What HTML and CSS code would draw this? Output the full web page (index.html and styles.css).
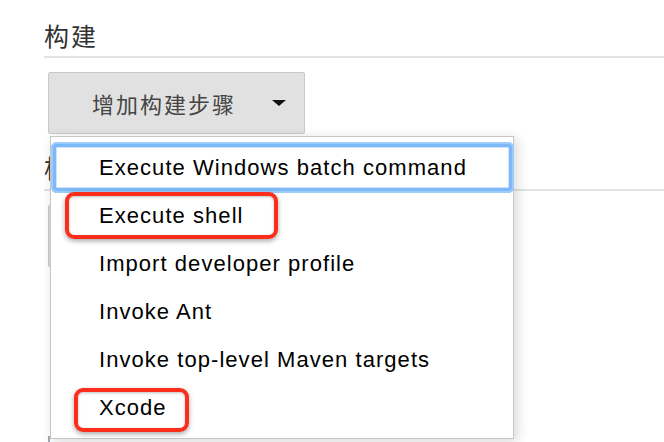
FILE: index.html
```html
<!DOCTYPE html>
<html lang="zh-CN">
<head>
<meta charset="utf-8">
<title>构建</title>
<link rel="stylesheet" href="styles.css">
</head>
<body>
<div class="page">
  <section class="section">
    <h2 class="title">构建</h2>
    <button class="add-btn" type="button"><span class="btn-label">增加构建步骤</span><span class="caret"></span></button>
  </section>
  <section class="section second">
    <h2 class="title">构建后操作</h2>
    <button class="add-btn" type="button"><span class="btn-label">增加构建后操作步骤</span><span class="caret"></span></button>
    <div class="below-box"></div>
  </section>

  <ul class="menu">
    <li class="menu-item focused">Execute Windows batch command</li>
    <li class="menu-item">Execute shell</li>
    <li class="menu-item">Import developer profile</li>
    <li class="menu-item">Invoke Ant</li>
    <li class="menu-item">Invoke top-level Maven targets</li>
    <li class="menu-item">Xcode</li>
  </ul>

  <div class="mark mark-shell"></div>
  <div class="mark mark-xcode"></div>
</div>
</body>
</html>
```

FILE: styles.css
```css
html, body {
  margin: 0;
  padding: 0;
  background: #ffffff;
}

.page {
  position: relative;
  width: 664px;
  height: 442px;
  overflow: hidden;
  font-family: "Liberation Sans", "Noto Sans CJK SC", sans-serif;
}

.section {
  padding-left: 44px;
}

.title {
  margin: 0;
  padding: 19px 0 5px 0;
  font-family: "Noto Sans CJK SC", "Liberation Sans", sans-serif;
  font-size: 25px;
  font-weight: normal;
  line-height: 32px;
  letter-spacing: 2px;
  color: #333333;
  border-bottom: 2px solid #e2e2e2;
}

.add-btn {
  display: flex;
  align-items: center;
  box-sizing: border-box;
  margin: 14px 0 0 4px;
  width: 257px;
  height: 62px;
  padding: 0 0 0 43px;
  background: #e1e1e1;
  border: 1.5px solid #c9c9c9;
  border-radius: 2px;
  font-family: "Noto Sans CJK SC", "Liberation Sans", sans-serif;
  font-size: 22px;
  letter-spacing: 2px;
  color: #444444;
}

.btn-label {
  white-space: nowrap;
}

.caret {
  margin-left: 36px;
  width: 0;
  height: 0;
  border-left: 7px solid transparent;
  border-right: 7px solid transparent;
  border-top: 6px solid #111111;
}

.second .title {
  padding-top: 17px;
  padding-bottom: 6px;
}

.second .add-btn {
  margin-top: 14px;
}

.below-box {
  margin: 169px 0 0 4px;
  height: 20px;
  width: 300px;
  border-top: 1px solid #9fabb9;
  border-left: 2px solid #9fabb9;
}

.menu {
  position: absolute;
  left: 50px;
  top: 136px;
  box-sizing: border-box;
  width: 464px;
  height: 303px;
  margin: 0;
  padding: 6px 0 0 0;
  list-style: none;
  background: #ffffff;
  border: 1.5px solid #c6c6c6;
  box-shadow: 3px 3px 12px rgba(0, 0, 0, 0.16);
}

.menu-item {
  position: relative;
  box-sizing: border-box;
  height: 48px;
  padding-top: 2px;
  line-height: 46px;
  padding-left: 48px;
  font-size: 22px;
  letter-spacing: 1.05px;
  color: #000000;
  white-space: nowrap;
}

.menu-item.focused::after {
  content: "";
  position: absolute;
  left: 0;
  right: -1px;
  top: -1px;
  bottom: -2px;
  border-radius: 6px;
  box-shadow: inset 0 0 0 2px #9ecbfa, inset 0 0 0 5px #7db8f8, inset 0 0 0 6px #cfe4fc;
}

.mark {
  position: absolute;
  box-sizing: border-box;
  border: 4px solid #fb2e1c;
  border-radius: 9px;
  box-shadow: 0 2px 5px rgba(0, 0, 0, 0.35), inset 0 1px 3px rgba(0, 0, 0, 0.25);
}

.mark-shell {
  left: 65px;
  top: 192px;
  width: 213px;
  height: 47px;
}

.mark-xcode {
  left: 74px;
  top: 388px;
  width: 115px;
  height: 44px;
}
```
